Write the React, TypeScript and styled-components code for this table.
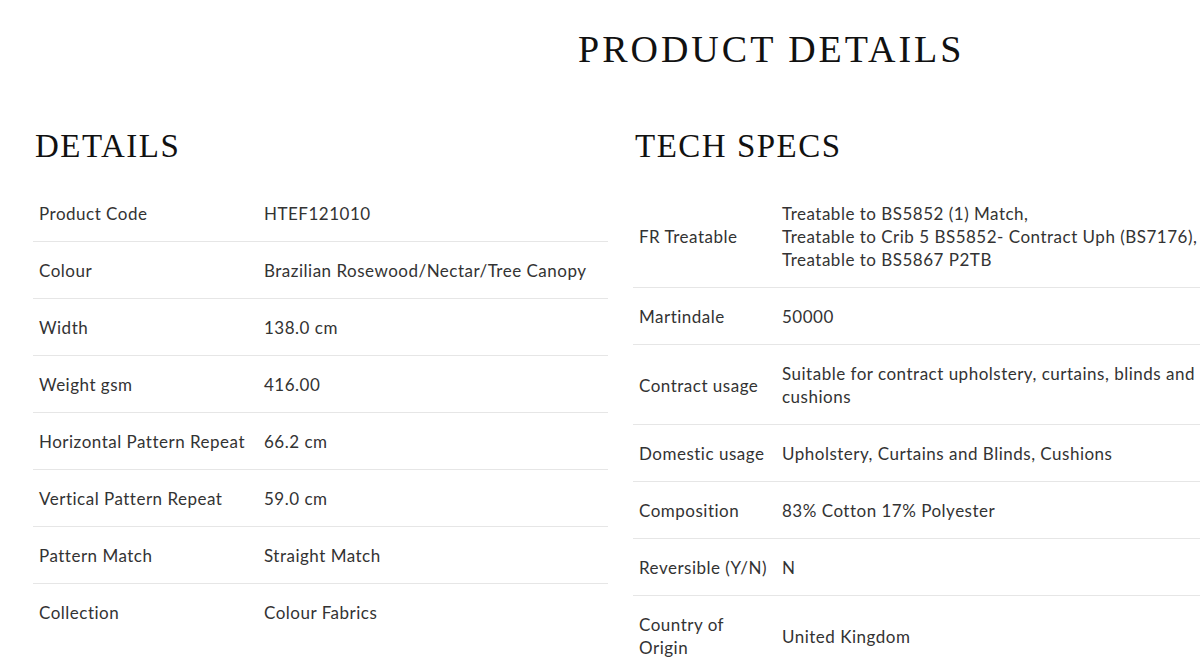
import React from "react";
import styled, { createGlobalStyle } from "styled-components";

const Global = createGlobalStyle`
  html, body { margin: 0; padding: 0; background: #fff; }
  body { overflow: hidden; width: 1200px; height: 664px; }
`;

const Page = styled.div`
  width: 1200px;
  height: 664px;
  overflow: hidden;
  box-sizing: border-box;
  padding-top: 27px;
  font-family: "Lato", "Noto Sans", sans-serif;
  color: #333;
`;

const PageTitle = styled.h1`
  margin: 0 0 0 578px;
  font-family: "Liberation Serif", "Times New Roman", serif;
  font-weight: 400;
  font-size: 38px;
  line-height: 44px;
  letter-spacing: 3px;
  color: #111;
  white-space: nowrap;
`;

const Columns = styled.div`
  display: grid;
  grid-template-columns: 575px 575px;
  column-gap: 25px;
  padding-left: 33px;
  margin-top: 56px;
`;

const Section = styled.section`
  display: flex;
  flex-direction: column;
`;

const SectionTitle = styled.h2`
  margin: 0 0 20px 2px;
  font-family: "Liberation Serif", "Times New Roman", serif;
  font-weight: 400;
  font-size: 33px;
  line-height: 38px;
  letter-spacing: 1.5px;
  color: #111;
  white-space: nowrap;
`;

const Table = styled.div<{ $label: number }>`
  display: grid;
  grid-template-columns: ${(p) => p.$label}px 1fr;
`;

const Cell = styled.div<{ $last?: boolean }>`
  display: flex;
  align-items: center;
  padding: 17px 6px 16px;
  font-size: 17px;
  line-height: 23px;
  letter-spacing: 0.5px;
  color: #333;
  border-bottom: ${(p) => (p.$last ? "none" : "1px solid #e6e6e6")};
`;

const LabelCell = styled(Cell)`
  padding-right: 0;
  white-space: nowrap;
`;

type Row = [React.ReactNode, React.ReactNode];

const details: Row[] = [
  ["Product Code", "HTEF121010"],
  ["Colour", "Brazilian Rosewood/Nectar/Tree Canopy"],
  ["Width", "138.0 cm"],
  ["Weight gsm", "416.00"],
  ["Horizontal Pattern Repeat", "66.2 cm"],
  ["Vertical Pattern Repeat", "59.0 cm"],
  ["Pattern Match", "Straight Match"],
  ["Collection", "Colour Fabrics"],
];

const specs: Row[] = [
  [
    "FR Treatable",
    <>
      Treatable to BS5852 (1) Match,
      <br />
      Treatable to Crib 5 BS5852- Contract Uph (BS7176),
      <br />
      Treatable to BS5867 P2TB
    </>,
  ],
  ["Martindale", "50000"],
  [
    "Contract usage",
    <>
      Suitable for contract upholstery, curtains, blinds and
      <br />
      cushions
    </>,
  ],
  ["Domestic usage", "Upholstery, Curtains and Blinds, Cushions"],
  ["Composition", "83% Cotton 17% Polyester"],
  ["Reversible (Y/N)", "N"],
  [
    <>
      Country of
      <br />
      Origin
    </>,
    "United Kingdom",
  ],
];

const SpecTable = ({ rows, label }: { rows: Row[]; label: number }) => (
  <Table $label={label}>
    {rows.map(([k, v], i) => {
      const last = i === rows.length - 1;
      return (
        <React.Fragment key={i}>
          <LabelCell $last={last}>{k}</LabelCell>
          <Cell $last={last}>{v}</Cell>
        </React.Fragment>
      );
    })}
  </Table>
);

export default function App() {
  return (
    <Page>
      <Global />
      <PageTitle>PRODUCT DETAILS</PageTitle>
      <Columns>
        <Section>
          <SectionTitle>DETAILS</SectionTitle>
          <SpecTable rows={details} label={225} />
        </Section>
        <Section>
          <SectionTitle>TECH SPECS</SectionTitle>
          <SpecTable rows={specs} label={143} />
        </Section>
      </Columns>
    </Page>
  );
}
